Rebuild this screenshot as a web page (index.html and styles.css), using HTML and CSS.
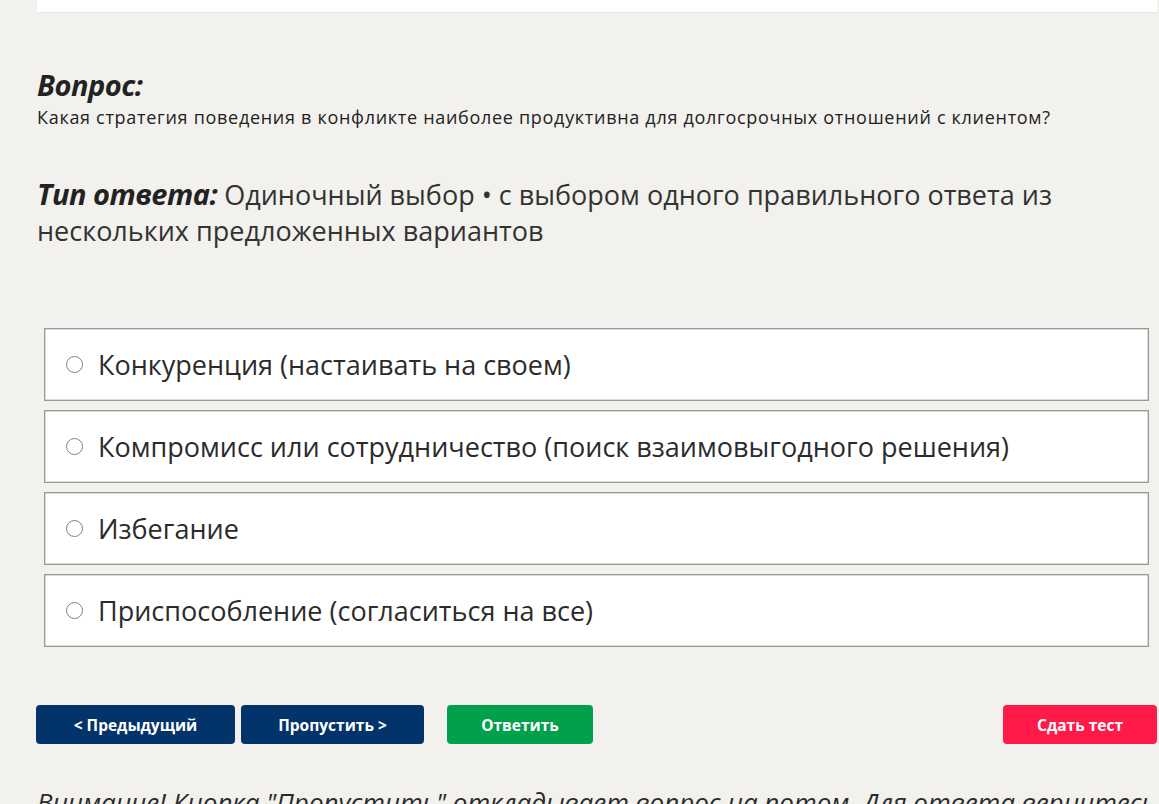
FILE: index.html
```html
<!DOCTYPE html>
<html lang="ru">
<head>
  <meta charset="UTF-8">
  <meta name="viewport" content="width=device-width, initial-scale=1.0">
  <title>Тест</title>
  <link rel="stylesheet" href="styles.css">
</head>
<body>
  <div class="top-panel"></div>

  <div class="container">
    <h2 class="q-title">Вопрос:</h2>
    <p class="q-text">Какая стратегия поведения в конфликте наиболее продуктивна для долгосрочных отношений с клиентом?</p>

    <div class="answer-type">
      <span class="label">Тип ответа:</span>Одиночный выбор • с выбором одного правильного ответа из нескольких предложенных вариантов
    </div>

    <div class="options">
      <label class="option"><span class="radio"></span>Конкуренция (настаивать на своем)</label>
      <label class="option"><span class="radio"></span>Компромисс или сотрудничество (поиск взаимовыгодного решения)</label>
      <label class="option"><span class="radio"></span>Избегание</label>
      <label class="option"><span class="radio"></span>Приспособление (согласиться на все)</label>
    </div>

    <div class="buttons">
      <button class="btn btn-nav btn-prev">&lt; Предыдущий</button>
      <button class="btn btn-nav btn-skip">Пропустить &gt;</button>
      <button class="btn btn-answer">Ответить</button>
      <button class="btn btn-finish">Сдать тест</button>
    </div>

    <p class="note">Внимание! Кнопка "Пропустить" откладывает вопрос на потом. Для ответа вернитесь к нему позже.</p>
  </div>
</body>
</html>
```

FILE: styles.css
```css
body {
  margin: 0;
  background-color: #f2f1ed;
  font-family: "Open Sans", "Noto Sans", sans-serif;
  color: #2b2b2b;
  overflow: hidden;
}
.top-panel {
  margin-left: 37px;
  margin-right: 2px;
  height: 12px;
  background-color: #ffffff;
  border-bottom: 1px solid #e6e6e3;
}
.container {
  padding: 0 2px 0 37px;
}
.q-title {
  margin: 55px 0 0;
  font-size: 29px;
  line-height: 34px;
  font-weight: 700;
  font-style: italic;
  letter-spacing: -0.5px;
  color: #222;
}
.q-text {
  margin: 3px 0 0;
  font-size: 18px;
  line-height: 24px;
  letter-spacing: 0.7px;
  color: #222;
}
.answer-type {
  margin-top: 47px;
  font-size: 27px;
  line-height: 36px;
  color: #333;
}
.answer-type .label {
  display: inline-block;
  margin-right: 5px;
  padding-right: 2px;
  font-size: 29px;
  font-weight: 700;
  font-style: italic;
  color: #222;
  letter-spacing: -0.5px;
}
.options {
  margin: 79px 8px 0 7px;
  display: flex;
  flex-direction: column;
  gap: 9px;
}
.option {
  display: flex;
  align-items: center;
  height: 71px;
  padding-left: 21px;
  background-color: #ffffff;
  border: 1px solid #9a9a9a;
  box-shadow: inset 0 0 0 0.5px #b5b5b5;
  font-size: 27px;
  color: #2b2b2b;
  cursor: pointer;
}
.radio {
  width: 15px;
  height: 15px;
  border: 1.8px solid #808080;
  border-radius: 50%;
  margin-right: 15px;
  flex-shrink: 0;
}
.buttons {
  display: flex;
  margin-top: 58px;
  gap: 6px;
  margin-left: -1px;
}
.btn {
  height: 39px;
  border: none;
  border-radius: 4px;
  color: #ffffff;
  font-family: "Open Sans", "Noto Sans", sans-serif;
  font-size: 15.5px;
  font-weight: 700;
  cursor: pointer;
}
.btn-nav {
  background-color: #03336b;
}
.btn-prev {
  width: 199px;
}
.btn-skip {
  width: 183px;
}
.btn-answer {
  width: 146px;
  margin-left: 17px;
  background-color: #00a04c;
}
.btn-finish {
  width: 154px;
  margin-left: auto;
  background-color: #ff1a4a;
}
.note {
  margin: 40px 0 0;
  font-size: 26px;
  font-style: italic;
  color: #2b2b2b;
}
```
